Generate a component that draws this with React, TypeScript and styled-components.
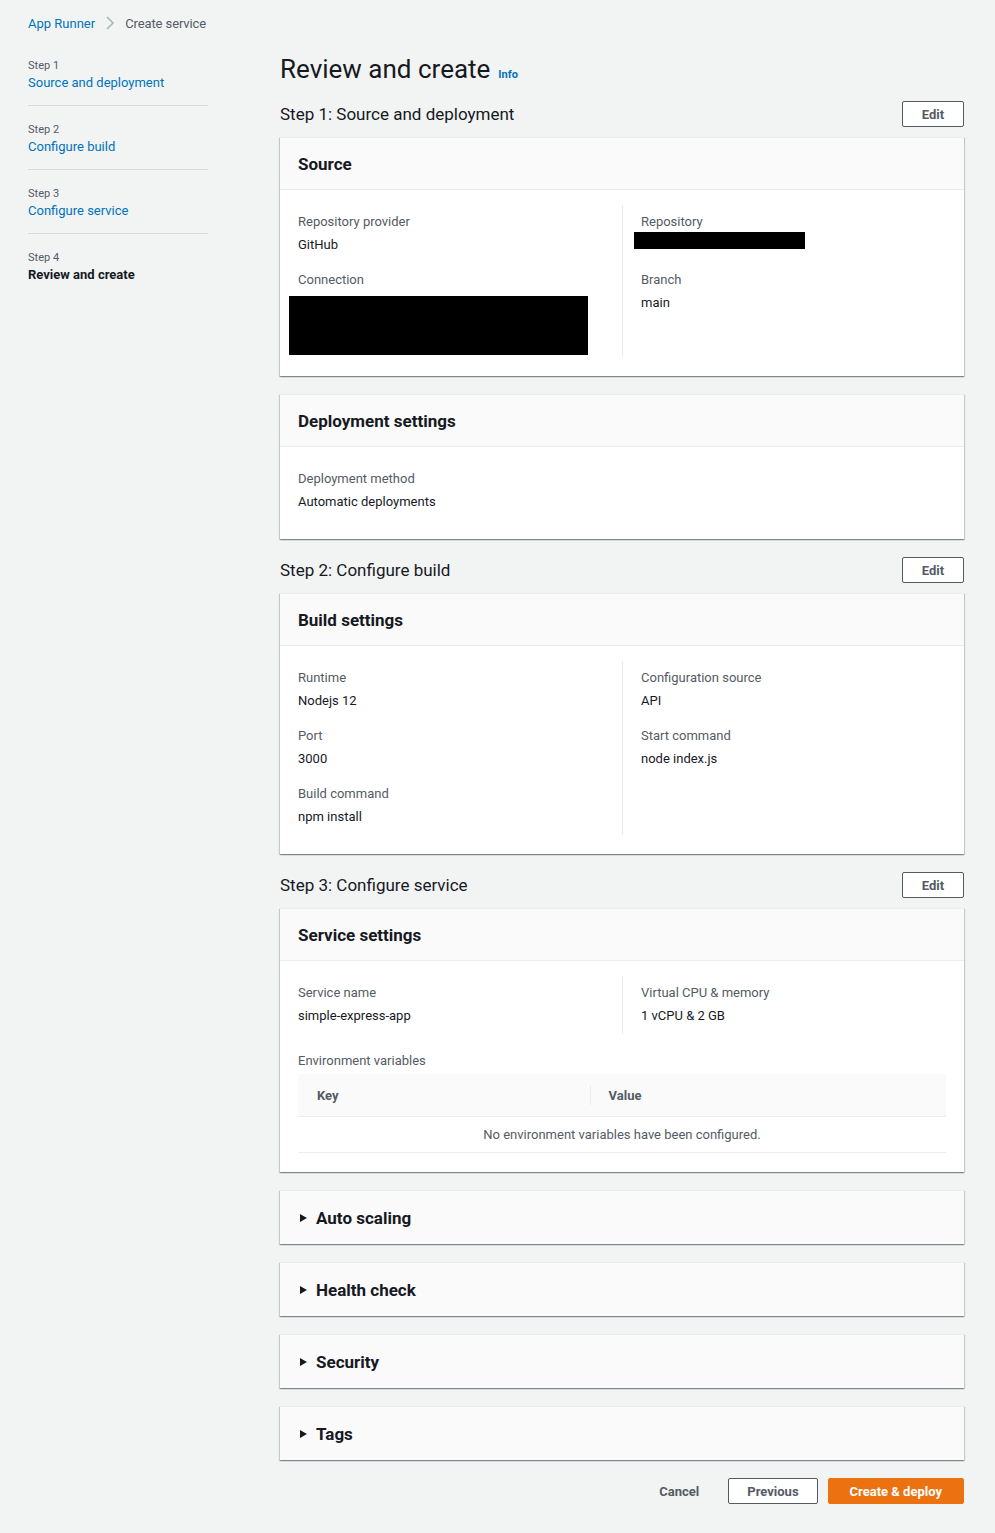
import React from "react";
import styled, { createGlobalStyle } from "styled-components";

const GlobalStyle = createGlobalStyle`
  html, body {
    margin: 0;
    padding: 0;
    background: #f2f3f3;
  }
  body {
    font-family: Roboto, "Liberation Sans", sans-serif;
    color: #16191f;
    -webkit-font-smoothing: antialiased;
  }
`;

const Layout = styled.div`
  display: grid;
  grid-template-columns: 252px 684px;
  padding: 0 31px 0 28px;
  min-height: 1533px;
  box-sizing: border-box;
`;

const Side = styled.aside`
  display: flex;
  flex-direction: column;
  padding-top: 13px;
`;

const Crumbs = styled.nav`
  display: flex;
  align-items: center;
  gap: 10px;
  height: 20px;
  font-size: 13px;
  white-space: nowrap;
`;

const CrumbLink = styled.span`
  color: #0073bb;
`;

const CrumbCurrent = styled.span`
  color: #545b64;
  letter-spacing: -0.1px;
`;

const StepList = styled.ol`
  list-style: none;
  margin: 26px 0 0;
  padding: 0;
  width: 180px;
`;

const StepItem = styled.li<{ $last?: boolean }>`
  padding: 0 0 12px;
  margin-bottom: 17px;
  border-bottom: ${(p) => (p.$last ? "none" : "1px solid #d5dbdb")};
`;

const StepNum = styled.div`
  font-size: 11px;
  line-height: 14px;
  color: #545b64;
`;

const StepLabel = styled.div<{ $active?: boolean }>`
  font-size: 13px;
  line-height: 20px;
  color: ${(p) => (p.$active ? "#16191f" : "#0073bb")};
  font-weight: ${(p) => (p.$active ? 700 : 400)};
`;

const Main = styled.main`
  display: flex;
  flex-direction: column;
  padding-top: 52px;
`;

const PageTitle = styled.h1`
  margin: 0 0 15px;
  height: 34px;
  font-size: 26px;
  line-height: 34px;
  font-weight: 400;
  display: flex;
  align-items: baseline;
  gap: 8px;
`;

const InfoLink = styled.span`
  font-size: 11px;
  line-height: 14px;
  font-weight: 700;
  color: #0073bb;
`;

const SectionHead = styled.div`
  display: flex;
  align-items: center;
  justify-content: space-between;
  height: 26px;
  margin-bottom: 10px;
`;

const SectionTitle = styled.h2`
  margin: 0;
  font-size: 17px;
  font-weight: 400;
`;

const Button = styled.button<{ $variant?: "normal" | "primary" | "link" }>`
  box-sizing: border-box;
  height: 26px;
  padding: 0 ${(p) => (p.$variant === "primary" ? 21 : 18)}px;
  font-family: inherit;
  font-size: 13px;
  font-weight: 700;
  border-radius: 2px;
  cursor: pointer;
  border: 1px solid
    ${(p) =>
      p.$variant === "primary"
        ? "#ec7211"
        : p.$variant === "link"
        ? "transparent"
        : "#545b64"};
  background: ${(p) =>
    p.$variant === "primary" ? "#ec7211" : p.$variant === "link" ? "transparent" : "#fff"};
  color: ${(p) => (p.$variant === "primary" ? "#fff" : "#545b64")};
`;

const EditButton = styled(Button)`
  min-width: 62px;
`;

const Card = styled.section<{ $collapsed?: boolean }>`
  background: ${(p) => (p.$collapsed ? "#fafafa" : "#fff")};
  box-shadow: 0 1px 1px 0 rgba(0, 28, 36, 0.3), 1px 1px 1px 0 rgba(0, 28, 36, 0.15),
    -1px 1px 1px 0 rgba(0, 28, 36, 0.15);
  border-top: 1px solid #eaeded;
  margin-bottom: 18px;
`;

const CardHeader = styled.header`
  background: #fafafa;
  border-bottom: 1px solid #eaeded;
  height: 51px;
  display: flex;
  align-items: center;
  padding: 0 18px;
`;

const CardTitle = styled.h3`
  margin: 0;
  font-size: 17px;
  font-weight: 700;
`;

const CardBody = styled.div`
  padding: 15px 18px 19px;
`;

const Columns = styled.div`
  display: grid;
  grid-template-columns: 1fr 1fr;
`;

const Column = styled.div<{ $right?: boolean }>`
  display: flex;
  flex-direction: column;
  gap: 14px;
  padding: ${(p) => (p.$right ? "7px 0 7px 18px" : "7px 18px 7px 0")};
  border-left: ${(p) => (p.$right ? "1px solid #eaeded" : "none")};
`;

const Field = styled.div`
  display: flex;
  flex-direction: column;
  gap: 1px;
`;

const Label = styled.div`
  font-size: 13px;
  line-height: 20px;
  color: #545b64;
`;

const Value = styled.div`
  font-size: 13px;
  line-height: 23px;
  color: #16191f;
`;

// blacked-out values, as in the screenshot
const Redacted = styled.div<{ $w: number; $h: number; $shift: number; $top: number; $bottom: number }>`
  width: ${(p) => p.$w}px;
  height: ${(p) => p.$h}px;
  background: #000;
  margin: ${(p) => `${p.$top}px 0 ${p.$bottom}px ${p.$shift}px`};
`;

const EnvBlock = styled.div`
  margin-top: 17px;
`;

const Table = styled.table`
  width: 100%;
  border-collapse: collapse;
  margin-top: 3px;
  font-size: 13px;
`;

const Th = styled.th<{ $sep?: boolean; $width?: string }>`
  background: #fafafa;
  height: 42px;
  width: ${(p) => p.$width ?? "auto"};
  text-align: left;
  font-weight: 700;
  color: #545b64;
  padding: 0 19px;
  border-bottom: 1px solid #eaeded;
  position: relative;
  ${(p) =>
    p.$sep
      ? `&::before {
    content: "";
    position: absolute;
    left: 0;
    top: 11px;
    bottom: 11px;
    border-left: 1px solid #eaeded;
  }`
      : ""}
`;

const Empty = styled.td`
  text-align: center;
  height: 35px;
  padding: 0;
  line-height: 20px;
  color: #545b64;
  border-bottom: 1px solid #eaeded;
`;

const Expander = styled.div`
  height: 53px;
  display: flex;
  align-items: center;
  gap: 9px;
  padding: 0 20px;
  font-size: 17px;
  font-weight: 700;
`;

const Caret = styled.span`
  width: 0;
  height: 0;
  border-top: 4.5px solid transparent;
  border-bottom: 4.5px solid transparent;
  border-left: 7px solid #16191f;
`;

const Footer = styled.div`
  display: flex;
  justify-content: flex-end;
  align-items: center;
  gap: 10px;
`;

const steps = ["Source and deployment", "Configure build", "Configure service", "Review and create"];

const Chevron = () => (
  <svg width="10" height="14" viewBox="0 0 10 14" aria-hidden>
    <path d="M2 1l6 6-6 6" fill="none" stroke="#aab7b8" strokeWidth="1.6" />
  </svg>
);

export default function App() {
  return (
    <>
      <GlobalStyle />
      <Layout>
        <Side>
          <Crumbs>
            <CrumbLink>App Runner</CrumbLink>
            <Chevron />
            <CrumbCurrent>Create service</CrumbCurrent>
          </Crumbs>
          <StepList>
            {steps.map((s, i) => (
              <StepItem key={s} $last={i === steps.length - 1}>
                <StepNum>Step {i + 1}</StepNum>
                <StepLabel $active={i === steps.length - 1}>{s}</StepLabel>
              </StepItem>
            ))}
          </StepList>
        </Side>

        <Main>
          <PageTitle>
            Review and create <InfoLink>Info</InfoLink>
          </PageTitle>

          <SectionHead>
            <SectionTitle>Step 1: Source and deployment</SectionTitle>
            <EditButton>Edit</EditButton>
          </SectionHead>
          <Card>
            <CardHeader>
              <CardTitle>Source</CardTitle>
            </CardHeader>
            <CardBody>
              <Columns>
                <Column>
                  <Field>
                    <Label>Repository provider</Label>
                    <Value>GitHub</Value>
                  </Field>
                  <Field>
                    <Label>Connection</Label>
                    <Redacted $w={299} $h={59} $shift={-9} $top={5} $bottom={-5} />
                  </Field>
                </Column>
                <Column $right>
                  <Field>
                    <Label>Repository</Label>
                    <Redacted $w={171} $h={17} $shift={-7} $top={-1} $bottom={7} />
                  </Field>
                  <Field>
                    <Label>Branch</Label>
                    <Value>main</Value>
                  </Field>
                </Column>
              </Columns>
            </CardBody>
          </Card>

          <Card>
            <CardHeader>
              <CardTitle>Deployment settings</CardTitle>
            </CardHeader>
            <CardBody>
              <Column>
                <Field>
                  <Label>Deployment method</Label>
                  <Value>Automatic deployments</Value>
                </Field>
              </Column>
            </CardBody>
          </Card>

          <SectionHead>
            <SectionTitle>Step 2: Configure build</SectionTitle>
            <EditButton>Edit</EditButton>
          </SectionHead>
          <Card>
            <CardHeader>
              <CardTitle>Build settings</CardTitle>
            </CardHeader>
            <CardBody>
              <Columns>
                <Column>
                  <Field>
                    <Label>Runtime</Label>
                    <Value>Nodejs 12</Value>
                  </Field>
                  <Field>
                    <Label>Port</Label>
                    <Value>3000</Value>
                  </Field>
                  <Field>
                    <Label>Build command</Label>
                    <Value>npm install</Value>
                  </Field>
                </Column>
                <Column $right>
                  <Field>
                    <Label>Configuration source</Label>
                    <Value>API</Value>
                  </Field>
                  <Field>
                    <Label>Start command</Label>
                    <Value>node index.js</Value>
                  </Field>
                </Column>
              </Columns>
            </CardBody>
          </Card>

          <SectionHead>
            <SectionTitle>Step 3: Configure service</SectionTitle>
            <EditButton>Edit</EditButton>
          </SectionHead>
          <Card>
            <CardHeader>
              <CardTitle>Service settings</CardTitle>
            </CardHeader>
            <CardBody>
              <Columns>
                <Column>
                  <Field>
                    <Label>Service name</Label>
                    <Value>simple-express-app</Value>
                  </Field>
                </Column>
                <Column $right>
                  <Field>
                    <Label>Virtual CPU &amp; memory</Label>
                    <Value>1 vCPU &amp; 2 GB</Value>
                  </Field>
                </Column>
              </Columns>
              <EnvBlock>
                <Label>Environment variables</Label>
                <Table>
                  <thead>
                    <tr>
                      <Th $width="45%">Key</Th>
                      <Th $sep>Value</Th>
                    </tr>
                  </thead>
                  <tbody>
                    <tr>
                      <Empty colSpan={2}>No environment variables have been configured.</Empty>
                    </tr>
                  </tbody>
                </Table>
              </EnvBlock>
            </CardBody>
          </Card>

          {["Auto scaling", "Health check", "Security", "Tags"].map((t) => (
            <Card key={t} $collapsed>
              <Expander>
                <Caret />
                {t}
              </Expander>
            </Card>
          ))}

          <Footer>
            <Button $variant="link">Cancel</Button>
            <Button>Previous</Button>
            <Button $variant="primary">Create &amp; deploy</Button>
          </Footer>
        </Main>
      </Layout>
    </>
  );
}
